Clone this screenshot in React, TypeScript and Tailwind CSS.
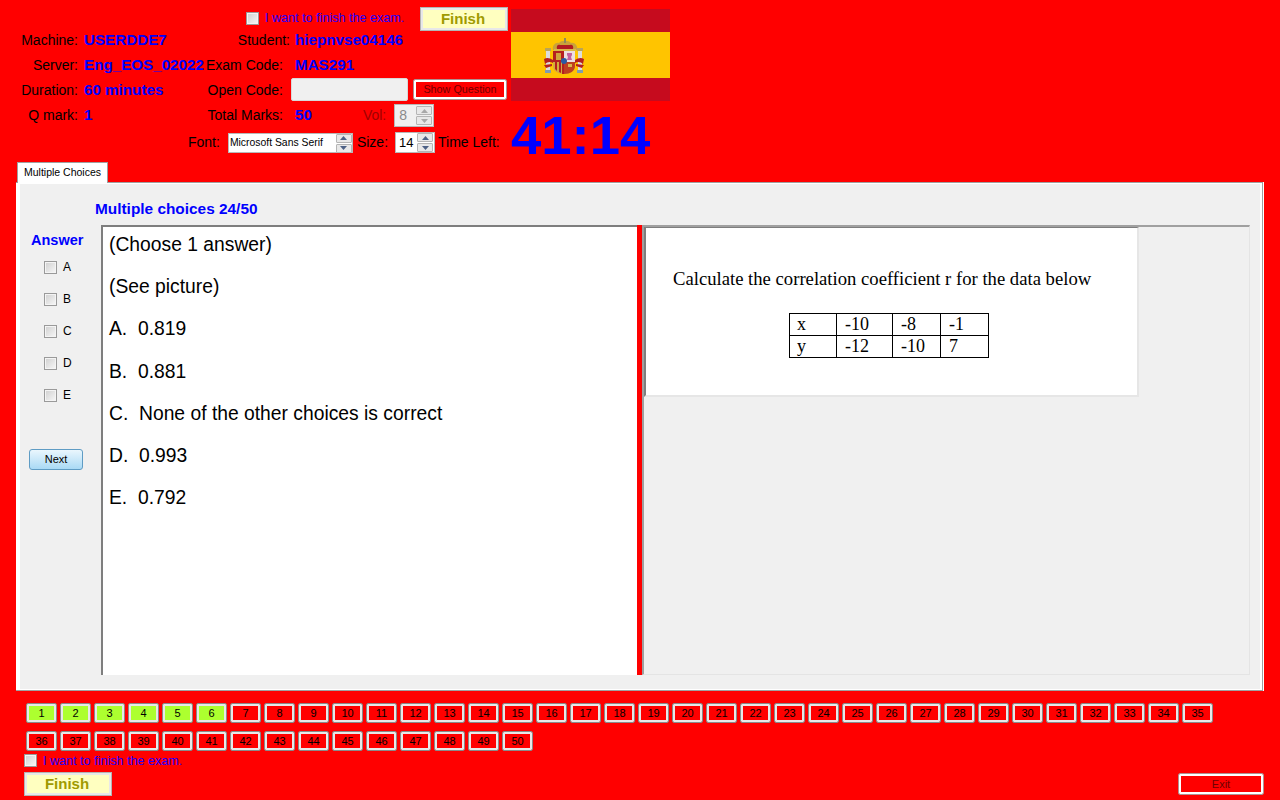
import { ReactNode } from "react";

const sans = "[font-family:'Liberation_Sans',Arial,sans-serif]";

const done = [1, 2, 3, 4, 5, 6];
const choices = ["A", "B", "C", "D", "E"];
const lines = [
  "(Choose 1 answer)",
  "(See picture)",
  "A.  0.819",
  "B.  0.881",
  "C.  None of the other choices is correct",
  "D.  0.993",
  "E.  0.792",
];
const table = [
  ["x", "-10", "-8", "-1"],
  ["y", "-12", "-10", "7"],
];

function Box() {
  return (
    <span className="block size-[13px] shrink-0 border border-[#9a9a9a] bg-gradient-to-br from-[#cfcfcf] to-[#f8f8f8] shadow-[inset_0_0_0_1px_#f4f4f4]" />
  );
}

function Spin({ disabled }: { disabled?: boolean }) {
  const c = disabled ? "#a8a8a8" : "#4d6185";
  return (
    <span className="flex w-[16px] flex-col gap-px">
      <span className="flex h-[9px] items-center justify-center rounded-[1px] border border-[#b5b5b5] bg-[#e8e8e8]">
        <svg width="7" height="4" viewBox="0 0 7 4"><path d="M3.5 0 7 4H0z" fill={c} /></svg>
      </span>
      <span className="flex h-[9px] items-center justify-center rounded-[1px] border border-[#b5b5b5] bg-[#e8e8e8]">
        <svg width="7" height="4" viewBox="0 0 7 4"><path d="M0 0h7L3.5 4z" fill={c} /></svg>
      </span>
    </span>
  );
}

function Row({ a, b, c, d, wide, children }: { a?: string; b?: string; c: string; d?: string; wide?: boolean; children?: ReactNode }) {
  return (
    <div className="flex h-[25px] items-center">
      <span className="w-[78px] text-right text-[14px] text-black">{a}</span>
      <span className="ml-[6px] w-[120px] whitespace-nowrap text-[15.2px] font-bold text-[#0000ff]">{b}</span>
      <span className={`whitespace-nowrap text-right text-[14px] text-black ${wide ? "w-[86px]" : "w-[79px]"}`}>{c}</span>
      {d && <span className={`whitespace-nowrap text-[15.2px] font-bold text-[#0000ff] ${wide ? "ml-[5px]" : "ml-[12px]"}`}>{d}</span>}
      {children}
    </div>
  );
}

function FinishButton({ className }: { className: string }) {
  return (
    <button className={`flex h-[24px] w-[88px] items-center justify-center border border-[#b4b4b4] bg-[#ffffc0] pr-[2px] text-[15px] font-bold text-[#a09a00] shadow-[inset_0_0_0_2px_#e8e8e8] ${className}`}>
      Finish
    </button>
  );
}

function Crest() {
  return (
    <svg width="42" height="36" viewBox="0 0 42 36" className="ml-[33px] mb-[-1px] shrink-0">
      <path d="M9 12c-1-5 3-8 6-7 2-3 10-3 12 0 3-1 7 2 6 7z" fill="#c9a33a" />
      <path d="M13 11c-1-3 1-5 3-4h10c2-1 4 1 3 4z" fill="#b01c20" />
      <rect x="20" y="0" width="2" height="5" fill="#8f8a5c" />
      <rect x="10" y="11" width="22" height="2" fill="#d9b84a" />
      <rect x="2" y="13" width="4" height="20" fill="#dcdcdc" />
      <rect x="34" y="13" width="4" height="20" fill="#dcdcdc" />
      <rect x="1" y="10" width="6" height="3" fill="#b9a458" />
      <rect x="33" y="10" width="6" height="3" fill="#b9a458" />
      <rect x="1" y="32" width="6" height="3" fill="#7f9db0" />
      <rect x="33" y="32" width="6" height="3" fill="#7f9db0" />
      <path d="M0 21c3-2 6-1 9 1v3c-3-2-6-1-8 1zM0 27l8-1v2l-6 2z" fill="#b3201f" />
      <path d="M40 21c-3-2-6-1-9 1v3c3-2 6-1 8 1zM40 27l-8-1v2l6 2z" fill="#b3201f" />
      <path d="M9 13h22v15c0 5-5 8-11 8S9 33 9 28z" fill="#d2ab3e" />
      <rect x="9" y="13" width="11" height="11" fill="#b51f1f" />
      <rect x="20" y="13" width="11" height="11" fill="#ecdfe2" />
      <path d="M23 15h5v2l-1 2 1 3h-5l1-3-1-2z" fill="#c2619f" />
      <rect x="12" y="15" width="5" height="7" fill="#cfa53c" />
      <path d="M20 24h11v4c0 5-5 8-11 8z" fill="#bf3f20" />
      <path d="M24 26h4v3h-4z" fill="#d9b84a" />
      <path d="M11 24h2v9l-2-2zM15 24h2v11l-2-1zM18 24h2v12h-2z" fill="#b3201f" />
      <circle cx="20" cy="23" r="3" fill="#2a5aa3" />
    </svg>
  );
}

function Header() {
  return (
    <div className="flex h-[162px] shrink-0 items-start">
      <div className="w-[511px] pt-[7px]">
        <div className="flex h-[24px] items-center">
          <span className="mb-px ml-[246px]"><Box /></span>
          <span className="mb-[2px] ml-[6px] w-[162px] whitespace-nowrap text-[12.6px] text-[#2400ff]">I want to finish the exam.</span>
          <FinishButton className="ml-[-7px]" />
        </div>
        <div className="-mt-[3px]">
          <Row a="Machine:" b="USERDDE7" c="Student:" d="hiepnvse04146" wide />
          <Row a="Server:" b="Eng_EOS_02022" c="Exam Code:" d="MAS291" />
          <Row a="Duration:" b="60 minutes" c="Open Code:">
            <span className="mb-[2px] ml-[8px] h-[23px] w-[117px] rounded-[2px] border border-[#d8d8d8] bg-[#f0f0f0]" />
            <button className="mb-[2px] ml-[5px] flex h-[21px] w-[94px] items-center justify-center rounded-[2px] border border-[#b09090] text-[10.8px] text-[#700000] shadow-[inset_0_0_0_2px_#ffffff]">
              Show Question
            </button>
          </Row>
          <Row a="Q mark:" b="1" c="Total Marks:" d="50">
            <span className="ml-[51px] text-[14px] text-[#a00000]">Vol:</span>
            <span className="ml-[8px] flex h-[23px] w-[40px] items-center justify-between border border-[#b8b8b8] bg-[#f0f0f0] pl-[4px] pr-[1px] text-[14px] text-[#8a8a8a]">
              8
              <Spin disabled />
            </span>
          </Row>
          <div className="flex h-[29px] items-center">
            <span className="ml-[188px] text-[14px] text-black">Font:</span>
            <span className="ml-[8px] mt-px flex h-[20px] w-[125px] items-center justify-between border border-[#b8b8b8] bg-white pl-px text-[10.4px] text-black">
              Microsoft Sans Serif
              <Spin />
            </span>
            <span className="ml-[4px] text-[14px] text-black">Size:</span>
            <span className="ml-[7px] flex h-[21px] w-[40px] items-center justify-between border border-[#b8b8b8] bg-white pl-[3px] pr-[1px] text-[13px] text-black">
              14
              <Spin />
            </span>
            <span className="ml-[3px] whitespace-nowrap text-[14px] text-black">Time Left:</span>
          </div>
        </div>
      </div>
      <div className="w-[159px] pt-[9px]">
        <div className="flex h-[92px] flex-col">
          <div className="h-[23px] bg-[#c60b1e]" />
          <div className="flex h-[46px] items-center bg-[#ffc400]">
            <Crest />
          </div>
          <div className="h-[23px] bg-[#c60b1e]" />
        </div>
        <div className="mt-[3px] text-[54.5px] font-bold leading-[64px] text-[#0000ff]">41:14</div>
      </div>
    </div>
  );
}

function Panel() {
  return (
    <div className="h-[509px] border-r border-white">
      <div className="h-full border-y border-r border-[#a0a0a0]">
        <div className="h-full border-y border-l-4 border-r-2 border-white bg-[#f0f0f0]">
          <div className="h-[41px] pl-[75px] pt-[17px] text-[15.4px] font-bold leading-[16px] text-[#0000ff]">Multiple choices 24/50</div>
          <div className="flex h-[450px]">
            <div className="flex w-[81px] shrink-0 flex-col pt-[7px]">
              <div className="pl-[11px] text-[14.5px] font-bold leading-[16px] text-[#0000ff]">Answer</div>
              <div className="mt-[13px] flex flex-col gap-[19px] pl-[24px]">
                {choices.map((c) => (
                  <label key={c} className="flex items-center gap-[6px] text-[12px] leading-[13px] text-black">
                    <Box />
                    {c}
                  </label>
                ))}
              </div>
              <button className="ml-[9px] mt-[47px] h-[21px] w-[54px] rounded-[3px] border border-[#5f9cc4] bg-gradient-to-b from-[#eaf6fd] to-[#a9daf5] text-[11px] text-black">
                Next
              </button>
            </div>
            <div className="flex w-[536px] shrink-0 flex-col gap-[8.2px] border-l-2 border-t-2 border-[#7e7e7e] bg-white pl-[6px] pt-px text-[19.3px] leading-[34px] text-black">
              {lines.map((l) => (
                <div key={l} className="whitespace-pre">{l}</div>
              ))}
            </div>
            <div className="w-[5px] shrink-0 bg-[#ff0000]" />
            <div className="h-full w-[608px] border-l-2 border-t-2 border-[#a0a0a0] border-b border-r border-b-[#e4e4e4] border-r-[#e4e4e4]">
              <div className="h-[170px] w-[495px] border-b-2 border-l-2 border-r-2 border-t border-[#7e7e7e] border-b-[#e6e6e6] border-r-[#e6e6e6] bg-white pl-[27px] pt-[40px] [font-family:'Liberation_Serif',serif] text-black">
                <div className="whitespace-nowrap text-[18.67px] leading-[22px]">Calculate the correlation coefficient r for the data below</div>
                <table className="ml-[116px] mt-[23px] border-collapse text-[18px] leading-[19px]">
                  <tbody>
                    {table.map((r) => (
                      <tr key={r[0]} className="h-[22px]">
                        <td className="w-[47px] border border-black pl-[7px]">{r[0]}</td>
                        <td className="w-[56px] border border-black pl-[8px]">{r[1]}</td>
                        <td className="w-[48px] border border-black pl-[8px]">{r[2]}</td>
                        <td className="w-[48px] border border-black pl-[8px]">{r[3]}</td>
                      </tr>
                    ))}
                  </tbody>
                </table>
              </div>
            </div>
          </div>
        </div>
      </div>
    </div>
  );
}

function Num({ n }: { n: number }) {
  return (
    <button className={`flex h-[20px] w-[31px] items-center justify-center rounded-[2px] border border-[#8a8a8a] text-[11px] text-black shadow-[inset_0_0_0_2px_#e8e8e8] ${done.includes(n) ? "bg-[#adff2f]" : "bg-[#ff0000]"}`}>
      {n}
    </button>
  );
}

export default function App() {
  const all = Array.from({ length: 50 }, (_, i) => i + 1);
  return (
    <div className={`flex h-[800px] w-[1280px] flex-col overflow-hidden bg-[#ff0000] ${sans}`}>
      <Header />
      <div className="ml-[16px] w-[1248px]">
        <div className="relative z-10 -mb-px ml-px flex h-[21px] w-[91px] items-center justify-center border-x border-t border-[#a0a0a0] bg-white pb-px text-[10.5px] text-black">
          Multiple Choices
        </div>
        <Panel />
      </div>
      <div className="ml-[26px] mt-[12px] grid w-[1190px] grid-cols-[repeat(35,31px)] gap-x-[3px] gap-y-[8px]">
        {all.map((n) => (
          <Num key={n} n={n} />
        ))}
      </div>
      <div className="ml-[24px] mt-[2px] flex h-[14px] items-center gap-[6px]">
        <Box />
        <span className="mt-[2px] whitespace-nowrap text-[12.6px] text-[#2400ff]">I want to finish the exam.</span>
      </div>
      <div className="mt-[5px] flex items-start justify-between pl-[24px] pr-[16px]">
        <FinishButton className="" />
        <button className="mt-px h-[22px] w-[86px] rounded-[2px] border border-[#b09090] text-[11px] text-[#700000] shadow-[inset_0_0_0_2px_#ffffff]">
          Exit
        </button>
      </div>
    </div>
  );
}
